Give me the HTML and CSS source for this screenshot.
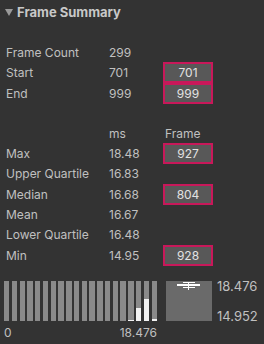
FILE: index.html
```html
<!DOCTYPE html>
<html lang="en">
<head>
  <meta charset="UTF-8" />
  <title>Frame Summary</title>
  <link rel="stylesheet" href="styles.css">
</head>
<body>
  <div class="panel">
    <div class="header">
      <svg class="fold" width="8" height="7" viewBox="0 0 8 7"><polygon points="0,0 8,0 4,7" fill="#9a9a9a"/></svg>
      <span class="title">Frame Summary</span>
    </div>

    <div class="stats">
      <div class="row"><span class="label">Frame Count</span><span class="value">299</span><span></span></div>
      <div class="row"><span class="label">Start</span><span class="value">701</span><span class="frame-box">701</span></div>
      <div class="row"><span class="label">End</span><span class="value">999</span><span class="frame-box">999</span></div>
    </div>

    <div class="stats second">
      <div class="row"><span class="label"></span><span class="value">ms</span><span class="col-head">Frame</span></div>
      <div class="row"><span class="label">Max</span><span class="value">18.48</span><span class="frame-box">927</span></div>
      <div class="row"><span class="label">Upper Quartile</span><span class="value">16.83</span><span></span></div>
      <div class="row"><span class="label">Median</span><span class="value">16.68</span><span class="frame-box">804</span></div>
      <div class="row"><span class="label">Mean</span><span class="value">16.67</span><span></span></div>
      <div class="row"><span class="label">Lower Quartile</span><span class="value">16.48</span><span></span></div>
      <div class="row"><span class="label">Min</span><span class="value">14.95</span><span class="frame-box">928</span></div>
    </div>

    <div class="charts">
      <div class="histogram">
        <div class="bars" id="bars"></div>
        <div class="axis"><span>0</span><span>18.476</span></div>
      </div>
      <div class="boxplot">
        <svg class="box" width="46" height="40" viewBox="0 0 46 40">
          <rect x="0" y="0" width="46" height="40" fill="#6a6a6a"/>
          <line x1="17" y1="1.5" x2="29" y2="1.5" stroke="#fff" stroke-width="1"/>
          <rect x="11" y="3" width="23" height="2" fill="#fff"/>
          <line x1="17" y1="6.5" x2="29" y2="6.5" stroke="#fff" stroke-width="1"/>
          <line x1="22.5" y1="1" x2="22.5" y2="9" stroke="#fff" stroke-width="1"/>
        </svg>
        <div class="box-labels"><span>18.476</span><span>14.952</span></div>
      </div>
    </div>
  </div>

  <script>
    // white part of each bar, in px out of 40
    const fills = [0,0,0,0,0,0,0,0,0,0,0,0,0,0,0,0,1,13,22,2];
    const bars = document.getElementById("bars");
    fills.forEach((h) => {
      const bar = document.createElement("div");
      bar.className = "bar";
      if (h > 0) {
        const fill = document.createElement("div");
        fill.className = "bar-fill";
        fill.style.height = h + "px";
        bar.appendChild(fill);
      }
      bars.appendChild(bar);
    });
  </script>
</body>
</html>
```

FILE: styles.css
```css
body {
  margin: 0;
  background-color: #333333;
  font-family: Inter, "Noto Sans", sans-serif;
  font-size: 12px;
  color: #c0c0c0;
}
.panel {
  width: 264px;
  height: 344px;
}
.header {
  height: 24px;
  display: flex;
  align-items: center;
  gap: 4px;
  padding-left: 5px;
}
.fold {
  margin-top: 1px;
}
.title {
  font-weight: bold;
  font-size: 13px;
  color: #c8c8c8;
}
.stats {
  margin-top: 18px;
  padding-left: 6px;
}
.stats.second {
  margin-top: 20.3px;
}
.row {
  display: grid;
  grid-template-columns: 103px 54px 50px;
  height: 20.3px;
  align-items: center;
}
.col-head {
  padding-left: 2px;
}
.frame-box {
  box-sizing: border-box;
  height: 21px;
  border: 2px solid #c8185a;
  background-color: #585858;
  color: #e2e2e2;
  text-align: center;
  line-height: 17px;
}
.charts {
  display: flex;
  margin-top: 16px;
  padding-left: 4px;
}
.histogram {
  width: 153px;
}
.bars {
  display: flex;
  gap: 2.4px;
  height: 40px;
}
.bar {
  flex: 1;
  background-color: #8a8a8a;
  display: flex;
  flex-direction: column;
  justify-content: flex-end;
}
.bar-fill {
  background-color: #f2f2f2;
}
.axis {
  display: flex;
  justify-content: space-between;
  margin-top: 4px;
}
.boxplot {
  display: flex;
  align-items: flex-start;
  margin-left: 9px;
}
.box-labels {
  display: flex;
  flex-direction: column;
  justify-content: space-between;
  height: 46px;
  margin-top: -3px;
  margin-left: 5px;
  font-size: 13px;
}
```
